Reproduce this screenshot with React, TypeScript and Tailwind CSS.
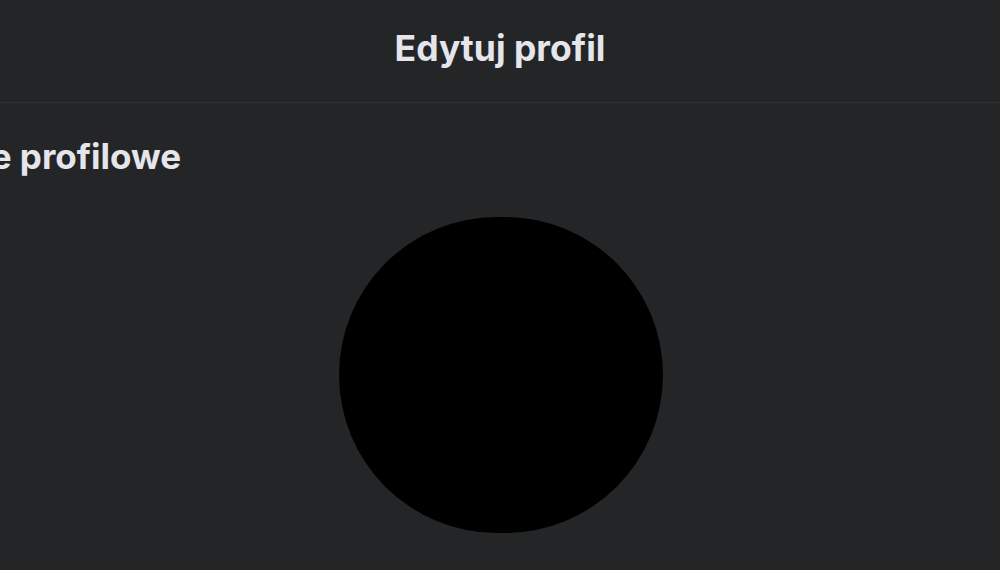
export default function App() {
  return (
    <div
      className="w-[1000px] h-[570px] overflow-hidden bg-[#242526] text-[#e4e6eb]"
      style={{ fontFamily: "Inter, 'Liberation Sans', sans-serif" }}
    >
      {/* Header */}
      <div className="h-[103px] flex items-center justify-center border-b border-[#303132] pb-[4px]">
        <h1 className="text-[35.5px] font-bold">Edytuj profil</h1>
      </div>

      {/* Profile picture section */}
      <div className="overflow-hidden">
        <div className="flex items-center h-[104px] pt-[2px] ml-[-115px]">
          <h2 className="text-[35px] font-bold whitespace-nowrap">Zdjęcie profilowe</h2>
        </div>
        <div className="flex justify-center pt-[10px]">
          <div className="w-[324px] h-[316px] rounded-full bg-black ml-[1px]" />
        </div>
      </div>
    </div>
  );
}
